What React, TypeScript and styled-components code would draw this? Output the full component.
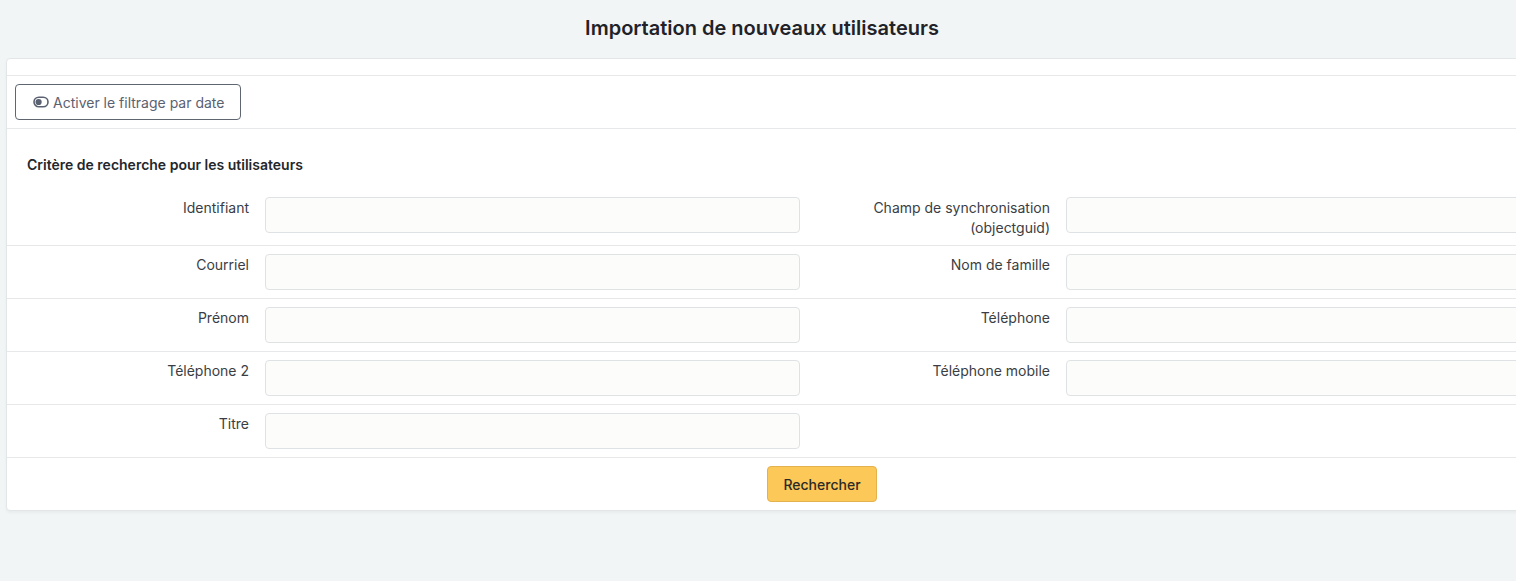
import React from "react";
import styled, { createGlobalStyle } from "styled-components";

const GlobalStyle = createGlobalStyle`
  html, body {
    margin: 0;
    padding: 0;
    background: #f2f5f5;
    overflow: hidden;
  }
  body {
    font-family: Inter, "Noto Sans", "Liberation Sans", sans-serif;
    color: #212529;
  }
  * { box-sizing: border-box; }
`;

const Page = styled.div`
  width: 1516px;
  min-height: 581px;
`;

const Header = styled.header`
  height: 58px;
  padding: 16px 0 0 8px;
  text-align: center;
`;

const Title = styled.h1`
  margin: 0;
  font-size: 20px;
  line-height: 24px;
  font-weight: 600;
  color: #1f2329;
`;

const Card = styled.section`
  margin-left: 6px;
  width: 1632px;
  background: #fff;
  border: 1px solid #e3e6e8;
  border-radius: 4px;
  box-shadow: 0 2px 3px rgba(0, 0, 0, 0.04);
`;

const CardHeader = styled.div`
  height: 17px;
  border-bottom: 1px solid #e6e8ea;
`;

const Toolbar = styled.div`
  padding: 8px;
  border-bottom: 1px solid #e6e8ea;
`;

const OutlineButton = styled.button`
  display: inline-flex;
  align-items: center;
  gap: 4px;
  height: 36px;
  padding: 0 16px 0 17px;
  background: #fff;
  border: 1px solid #5f6670;
  border-radius: 4px;
  font-family: inherit;
  font-size: 14px;
  color: #5a6170;
  cursor: pointer;
`;

const Section = styled.div`
  padding-top: 26px;
`;

const SectionTitle = styled.h2`
  margin: 0 0 14px 20px;
  font-size: 14px;
  line-height: 20px;
  font-weight: 600;
  color: #23272c;
`;

const Row = styled.div`
  display: grid;
  grid-template-columns: 801px 801px;
  padding: 8px 0;
  border-bottom: 1px solid #e6e8ea;
`;

const Field = styled.div`
  display: grid;
  grid-template-columns: 242px 535px;
  column-gap: 16px;
  align-items: start;
`;

const Label = styled.label`
  padding-top: 1px;
  margin-bottom: -1px;
  text-align: right;
  font-size: 14px;
  line-height: 20px;
  color: #3a3e44;
`;

const Input = styled.input`
  height: 36px;
  width: 100%;
  background: #fcfcfa;
  border: 1px solid #dfe2e5;
  border-radius: 4px;
  padding: 0 10px;
  font-family: inherit;
  font-size: 14px;
  outline: none;
`;

const Footer = styled.div`
  display: flex;
  justify-content: center;
  padding: 8px;
`;

const PrimaryButton = styled.button`
  width: 110px;
  height: 36px;
  background: #fcc858;
  border: 1px solid #e3b24f;
  border-radius: 4px;
  font-family: inherit;
  font-size: 14px;
  font-weight: 500;
  color: #2b2a27;
  cursor: pointer;
`;

const ToggleIcon = () => (
  <svg width="16" height="16" viewBox="0 0 16 16" aria-hidden="true">
    <rect x="1" y="3.2" width="14" height="9.6" rx="4.8" fill="none" stroke="currentColor" strokeWidth="1.6" />
    <circle cx="5.6" cy="8" r="3.1" fill="currentColor" />
  </svg>
);

type FieldDef = { label: string; id: string } | null;

const rows: [FieldDef, FieldDef][] = [
  [
    { label: "Identifiant", id: "identifiant" },
    { label: "Champ de synchronisation (objectguid)", id: "objectguid" },
  ],
  [
    { label: "Courriel", id: "courriel" },
    { label: "Nom de famille", id: "nom" },
  ],
  [
    { label: "Prénom", id: "prenom" },
    { label: "Téléphone", id: "telephone" },
  ],
  [
    { label: "Téléphone 2", id: "telephone2" },
    { label: "Téléphone mobile", id: "mobile" },
  ],
  [{ label: "Titre", id: "titre" }, null],
];

const FormField = ({ def }: { def: FieldDef }) =>
  def ? (
    <Field>
      <Label htmlFor={def.id}>{def.label}</Label>
      <Input id={def.id} type="text" />
    </Field>
  ) : (
    <div />
  );

export default function App() {
  return (
    <>
      <GlobalStyle />
      <Page>
        <Header>
          <Title>Importation de nouveaux utilisateurs</Title>
        </Header>
        <Card>
          <CardHeader />
          <Toolbar>
            <OutlineButton type="button">
              <ToggleIcon />
              Activer le filtrage par date
            </OutlineButton>
          </Toolbar>
          <Section>
            <SectionTitle>Critère de recherche pour les utilisateurs</SectionTitle>
            {rows.map(([a, b], i) => (
              <Row key={i}>
                <FormField def={a} />
                <FormField def={b} />
              </Row>
            ))}
          </Section>
          <Footer>
            <PrimaryButton type="button">Rechercher</PrimaryButton>
          </Footer>
        </Card>
      </Page>
    </>
  );
}
